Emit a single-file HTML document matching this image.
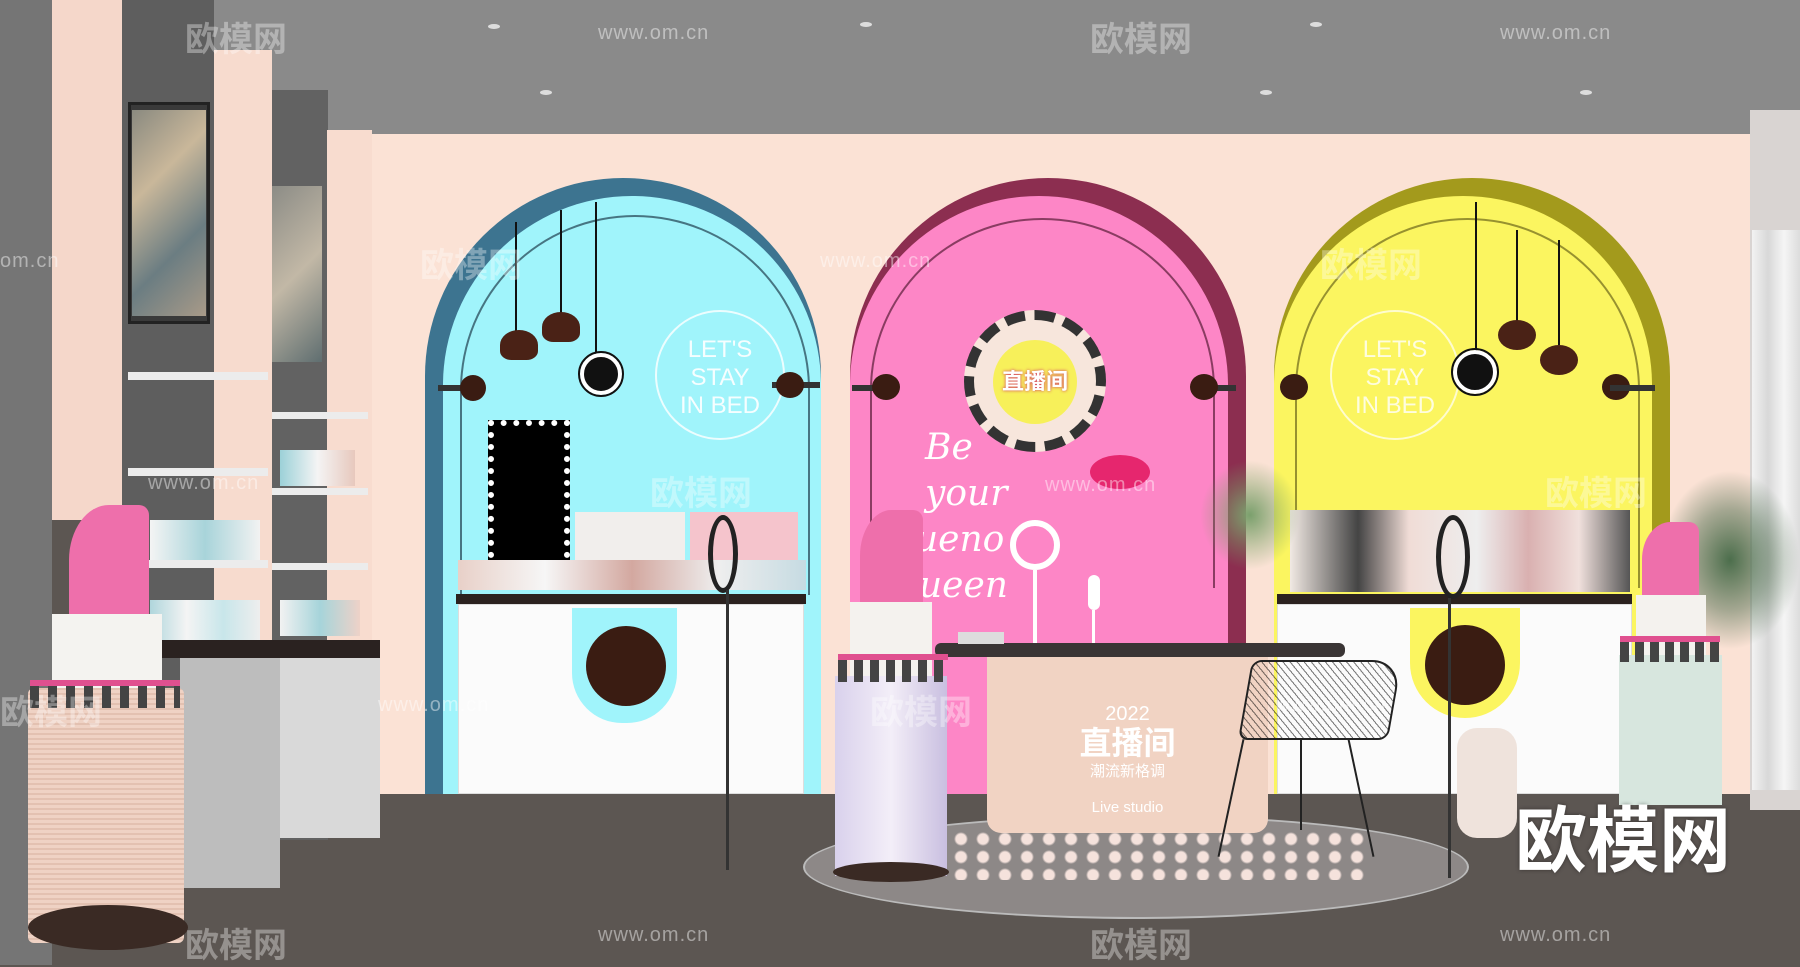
<!DOCTYPE html>
<html><head><meta charset="utf-8"><style>
*{margin:0;padding:0;box-sizing:border-box}
body{width:1800px;height:965px;overflow:hidden;background:#5c5652;position:relative;font-family:"Liberation Sans","Noto Sans CJK SC",sans-serif}
div{position:absolute}
.r{border-radius:50%}
.wm{color:rgba(255,255,255,.35);font-size:34px;font-weight:bold;white-space:nowrap}
.wm2{color:rgba(255,255,255,.45);font-size:20px;white-space:nowrap;letter-spacing:1px}
.lip{width:9px;height:26px;background:#444;border-top:6px solid #e0508f}
</style></head><body>
<!-- ceiling -->
<div style="left:0;top:0;width:1800px;height:134px;background:#8a8a8a"></div>
<div class="r" style="left:488px;top:24px;width:12px;height:5px;background:#ddd"></div>
<div class="r" style="left:860px;top:22px;width:12px;height:5px;background:#ddd"></div>
<div class="r" style="left:1310px;top:22px;width:12px;height:5px;background:#ddd"></div>
<div class="r" style="left:540px;top:90px;width:12px;height:5px;background:#ddd"></div>
<div class="r" style="left:1260px;top:90px;width:12px;height:5px;background:#ddd"></div>
<div class="r" style="left:1580px;top:90px;width:12px;height:5px;background:#ddd"></div>
<!-- back wall -->
<div style="left:327px;top:134px;width:1423px;height:660px;background:#fbe2d5"></div>
<!-- right wall & curtain -->
<div style="left:1750px;top:110px;width:50px;height:700px;background:#d9d4d2"></div>
<div style="left:1752px;top:230px;width:48px;height:560px;background:linear-gradient(90deg,#f2f2f2,#d8d8d8,#f5f5f5,#dcdcdc)"></div>
<!-- left structures -->
<div style="left:0;top:0;width:52px;height:965px;background:#757575"></div>
<div style="left:52px;top:0;width:70px;height:520px;background:#f5d7ca"></div>
<div style="left:122px;top:0;width:92px;height:880px;background:#5e5e5e"></div>
<div style="left:214px;top:50px;width:58px;height:600px;background:#f7dbce"></div>
<div style="left:272px;top:90px;width:56px;height:750px;background:#626262"></div>
<div style="left:327px;top:130px;width:45px;height:680px;background:#f8dccf"></div>
<div style="left:128px;top:102px;width:82px;height:222px;background:#3a3a3a;border:3px solid #222"></div>
<div style="left:132px;top:110px;width:74px;height:206px;background:linear-gradient(135deg,#8a8a80,#c9b79a,#6b7d82,#a89a88)"></div>
<div style="left:272px;top:186px;width:50px;height:176px;background:linear-gradient(135deg,#8c8c86,#c2b8a6,#5f6e70)"></div>
<div style="left:128px;top:372px;width:140px;height:8px;background:#ececec"></div>
<div style="left:128px;top:468px;width:140px;height:8px;background:#ececec"></div>
<div style="left:148px;top:560px;width:120px;height:8px;background:#ececec"></div>
<div style="left:272px;top:412px;width:96px;height:7px;background:#ececec"></div>
<div style="left:272px;top:488px;width:96px;height:7px;background:#ececec"></div>
<div style="left:272px;top:563px;width:96px;height:7px;background:#ececec"></div>
<div style="left:150px;top:600px;width:110px;height:40px;background:linear-gradient(90deg,#b0d6dc,#f4f4f4,#c8e6ea,#eee)"></div>
<div style="left:150px;top:520px;width:110px;height:40px;background:linear-gradient(90deg,#f4f4f4,#a8d4da,#f2f2f2)"></div>
<div style="left:280px;top:450px;width:75px;height:36px;background:linear-gradient(90deg,#9cd1d8,#f4f4f4,#e7c8bd)"></div>
<div style="left:280px;top:600px;width:80px;height:36px;background:linear-gradient(90deg,#f2f2f2,#a6d4da,#eed2c8)"></div>
<div style="left:160px;top:640px;width:220px;height:18px;background:#2a2220"></div>
<div style="left:180px;top:658px;width:100px;height:230px;background:#bdbdbd"></div>
<div style="left:280px;top:658px;width:100px;height:180px;background:#d9d9d9"></div>
<!-- BLUE ARCH -->
<div style="left:425px;top:178px;width:396px;height:616px;background:#3d7490;border-radius:198px 198px 0 0"></div>
<div style="left:443px;top:196px;width:378px;height:598px;background:#a0f4fb;border-radius:189px 189px 0 0"></div>
<div style="left:460px;top:215px;width:350px;height:380px;border:2px solid #214050;border-bottom:none;border-radius:175px 175px 0 0;opacity:.7"></div>
<div class="r" style="left:655px;top:310px;width:130px;height:130px;border:2px solid rgba(255,255,255,.8);color:rgba(255,255,255,.9);font-size:24px;text-align:center;padding-top:24px;line-height:28px">LET'S<br>STAY<br>IN BED</div>
<div style="left:488px;top:420px;width:82px;height:150px;background:#000;border:6px dotted #fff"></div>
<div style="left:575px;top:512px;width:110px;height:50px;background:#f1eeec"></div>
<div style="left:690px;top:512px;width:108px;height:50px;background:#f5c4cc"></div>
<div style="left:458px;top:560px;width:348px;height:30px;background:linear-gradient(90deg,#e8d0c8,#f6f6f6,#d3a8a0,#eeeeee,#c6dbe2)"></div>
<div style="left:456px;top:594px;width:350px;height:10px;background:#2b221f"></div>
<div style="left:458px;top:604px;width:346px;height:190px;background:#fbfbfb;border:1px solid #ddd"></div>
<div style="left:572px;top:608px;width:105px;height:115px;background:#a0f4fb;border-radius:0 0 50px 50px"></div>
<div class="r" style="left:586px;top:626px;width:80px;height:80px;background:#3a1c12"></div>
<div style="left:595px;top:202px;width:2px;height:155px;background:#111"></div>
<div class="r" style="left:580px;top:353px;width:42px;height:42px;background:#111;border:4px solid #fff;outline:2px solid #111"></div>
<div style="left:515px;top:222px;width:2px;height:110px;background:#111"></div>
<div class="r" style="left:500px;top:330px;width:38px;height:30px;background:#4a2216;border-radius:50% 50% 30% 30%"></div>
<div style="left:560px;top:210px;width:2px;height:105px;background:#111"></div>
<div class="r" style="left:542px;top:312px;width:38px;height:30px;background:#4a2216;border-radius:50% 50% 30% 30%"></div>
<div style="left:438px;top:385px;width:36px;height:6px;background:#333"></div>
<div class="r" style="left:460px;top:375px;width:26px;height:26px;background:#3a1c12"></div>
<div style="left:772px;top:382px;width:48px;height:6px;background:#333"></div>
<div class="r" style="left:776px;top:372px;width:28px;height:26px;background:#3a1c12"></div>
<!-- PINK ARCH -->
<div style="left:850px;top:178px;width:396px;height:616px;background:#8c2e50;border-radius:198px 198px 0 0"></div>
<div style="left:850px;top:196px;width:378px;height:598px;background:#fd86c6;border-radius:189px 189px 0 0"></div>
<div style="left:870px;top:218px;width:345px;height:370px;border:2px solid #5a1e38;border-bottom:none;border-radius:172px 172px 0 0;opacity:.7"></div>
<div class="r" style="left:964px;top:310px;width:142px;height:142px;background:#f7e6dc;border:10px dashed #333"></div>
<div class="r" style="left:993px;top:340px;width:84px;height:84px;background:#f7f05a;color:#fff;font-size:22px;font-weight:bold;text-align:center;line-height:84px;text-shadow:0 0 3px #d0306a">直播间</div>
<div class="r" style="left:1090px;top:455px;width:60px;height:34px;background:#e6266e"></div>
<div style="left:925px;top:425px;color:#fff;font-family:'DejaVu Serif',serif;font-style:italic;font-size:36px;line-height:46px">Be<br>your<br><span style="margin-left:-10px">ueno</span><br><span style="margin-left:-6px">ueen</span></div>
<div class="r" style="left:1010px;top:520px;width:50px;height:50px;border:6px solid #fff"></div>
<div style="left:1033px;top:570px;width:4px;height:75px;background:#fff"></div>
<div style="left:1088px;top:575px;width:12px;height:35px;background:#fff;border-radius:6px"></div>
<div style="left:1092px;top:610px;width:3px;height:35px;background:#fff"></div>
<div style="left:852px;top:385px;width:40px;height:6px;background:#333"></div>
<div class="r" style="left:872px;top:374px;width:28px;height:26px;background:#3a1c12"></div>
<div style="left:1200px;top:385px;width:36px;height:6px;background:#333"></div>
<div class="r" style="left:1190px;top:374px;width:28px;height:26px;background:#3a1c12"></div>
<!-- YELLOW ARCH -->
<div style="left:1274px;top:178px;width:396px;height:616px;background:#a39a1c;border-radius:198px 198px 0 0"></div>
<div style="left:1274px;top:196px;width:378px;height:598px;background:#fbf560;border-radius:189px 189px 0 0"></div>
<div style="left:1295px;top:218px;width:345px;height:370px;border:2px solid #555010;border-bottom:none;border-radius:172px 172px 0 0;opacity:.6"></div>
<div class="r" style="left:1330px;top:310px;width:130px;height:130px;border:2px solid rgba(255,255,255,.7);color:rgba(255,255,255,.8);font-size:24px;text-align:center;padding-top:24px;line-height:28px">LET'S<br>STAY<br>IN BED</div>
<div style="left:1290px;top:510px;width:340px;height:82px;background:linear-gradient(90deg,#f1e9e3,#444 20%,#f0dcd6 35%,#eee 55%,#d9b0b0 70%,#f0e0dc 85%,#555)"></div>
<div style="left:1277px;top:594px;width:355px;height:10px;background:#2b221f"></div>
<div style="left:1277px;top:604px;width:355px;height:190px;background:#fbfbfb;border:1px solid #ddd"></div>
<div style="left:1410px;top:608px;width:110px;height:110px;background:#fbf560;border-radius:0 0 55px 55px"></div>
<div class="r" style="left:1425px;top:625px;width:80px;height:80px;background:#3a1c12"></div>
<div style="left:1475px;top:202px;width:2px;height:150px;background:#111"></div>
<div class="r" style="left:1453px;top:350px;width:44px;height:44px;background:#111;border:4px solid #fff;outline:2px solid #111"></div>
<div style="left:1516px;top:230px;width:2px;height:95px;background:#111"></div>
<div class="r" style="left:1498px;top:320px;width:38px;height:30px;background:#4a2216"></div>
<div style="left:1558px;top:240px;width:2px;height:105px;background:#111"></div>
<div class="r" style="left:1540px;top:345px;width:38px;height:30px;background:#4a2216"></div>
<div class="r" style="left:1280px;top:374px;width:28px;height:26px;background:#3a1c12"></div>
<div class="r" style="left:1602px;top:374px;width:28px;height:26px;background:#3a1c12"></div>
<div style="left:1610px;top:385px;width:45px;height:6px;background:#333"></div>
<!-- floor rug -->
<div class="r" style="left:803px;top:815px;width:666px;height:104px;background:#8d8887;border:2px solid #bbb"></div>
<!-- desk -->
<div style="left:935px;top:643px;width:410px;height:14px;background:#3a3535;border-radius:6px"></div>
<div style="left:987px;top:657px;width:281px;height:176px;background:#f1d3c3;border-radius:0 0 14px 14px;color:#fff;text-align:center">
<div style="position:static;margin-top:46px;font-size:20px">2022</div>
<div style="position:static;font-size:32px;font-weight:bold;line-height:34px">直播间</div>
<div style="position:static;font-size:15px">潮流新格调</div>
<div style="position:static;font-size:15px;margin-top:18px">Live studio</div></div>
<div style="left:958px;top:632px;width:46px;height:12px;background:#ddd"></div>
<!-- balls -->
<div style="left:950px;top:830px;width:420px;height:50px;background:radial-gradient(circle,#f5e2dc 5px,transparent 7px) 0 0/22px 18px"></div>
<!-- chair -->
<div style="left:1245px;top:660px;width:150px;height:80px;border:2px solid #222;border-radius:10px 30px 10px 10px;background:repeating-linear-gradient(45deg,transparent 0 4px,rgba(0,0,0,.5) 4px 5px);transform:skewX(-10deg)"></div>
<div style="left:1230px;top:738px;width:2px;height:120px;background:#222;transform:rotate(12deg)"></div>
<div style="left:1360px;top:738px;width:2px;height:120px;background:#222;transform:rotate(-12deg)"></div>
<div style="left:1300px;top:740px;width:2px;height:90px;background:#222"></div>
<!-- ring lights/tripods -->
<div class="r" style="left:708px;top:515px;width:30px;height:78px;border:5px solid #222"></div>
<div style="left:726px;top:590px;width:3px;height:280px;background:#333"></div>
<div style="left:1436px;top:515px;width:34px;height:84px;border:5px solid #222;border-radius:50%"></div>
<div style="left:1448px;top:598px;width:3px;height:280px;background:#333"></div>
<!-- plant -->
<div style="left:1200px;top:460px;width:100px;height:110px;background:radial-gradient(ellipse,#7ba06d 0,rgba(120,160,100,.4) 40%,transparent 70%)"></div>
<div style="left:1660px;top:470px;width:140px;height:180px;background:radial-gradient(ellipse,#4c6e4c 0,rgba(80,110,80,.5) 40%,transparent 70%)"></div>
<div style="left:1457px;top:728px;width:60px;height:110px;background:#efe3dc;border-radius:20px"></div>
<!-- left lipstick -->
<div style="left:69px;top:505px;width:80px;height:110px;background:#ee6fab;border-radius:50% 10px 0 0"></div>
<div style="left:52px;top:614px;width:110px;height:75px;background:#f4f3f0"></div>
<div style="left:28px;top:688px;width:156px;height:255px;background:repeating-linear-gradient(0deg,#efd2c4 0 3px,#e3c1b1 3px 5px);border-radius:6px"></div>
<div style="left:28px;top:905px;width:160px;height:45px;background:#3a2a24;border-radius:50%"></div>
<div style="left:30px;top:680px;width:150px;height:28px;background:repeating-linear-gradient(90deg,#444 0 9px,transparent 9px 18px);border-top:6px solid #e0508f"></div>
<!-- middle lipstick -->
<div style="left:860px;top:510px;width:63px;height:92px;background:#ee6fab;border-radius:50% 10px 0 0"></div>
<div style="left:850px;top:602px;width:82px;height:80px;background:#f4f2ee"></div>
<div style="left:835px;top:676px;width:112px;height:200px;background:linear-gradient(90deg,#d9d1ec,#f3eef8,#c9bfe0)"></div>
<div style="left:833px;top:862px;width:116px;height:20px;background:#3a2a24;border-radius:50%"></div>
<div style="left:838px;top:654px;width:110px;height:28px;background:repeating-linear-gradient(90deg,#444 0 9px,transparent 9px 16px);border-top:6px solid #e0508f"></div>
<!-- right lipstick -->
<div style="left:1642px;top:522px;width:57px;height:75px;background:#ee6fab;border-radius:50% 10px 0 0"></div>
<div style="left:1636px;top:595px;width:70px;height:60px;background:#f4f2ee"></div>
<div style="left:1619px;top:655px;width:103px;height:150px;background:#d7e6de"></div>
<div style="left:1620px;top:636px;width:100px;height:26px;background:repeating-linear-gradient(90deg,#444 0 9px,transparent 9px 15px);border-top:6px solid #e0508f"></div>
<!-- watermarks -->
<div class="wm" style="left:185px;top:12px">欧模网</div>
<div class="wm2" style="left:598px;top:22px">www.om.cn</div>
<div class="wm" style="left:1090px;top:12px">欧模网</div>
<div class="wm2" style="left:1500px;top:22px">www.om.cn</div>
<div class="wm2" style="left:0;top:250px">om.cn</div>
<div class="wm" style="left:420px;top:238px">欧模网</div>
<div class="wm2" style="left:820px;top:250px">www.om.cn</div>
<div class="wm" style="left:1320px;top:238px">欧模网</div>
<div class="wm2" style="left:148px;top:472px">www.om.cn</div>
<div class="wm" style="left:650px;top:466px">欧模网</div>
<div class="wm2" style="left:1045px;top:474px">www.om.cn</div>
<div class="wm" style="left:1545px;top:466px">欧模网</div>
<div class="wm" style="left:0;top:685px">欧模网</div>
<div class="wm2" style="left:378px;top:694px">www.om.cn</div>
<div class="wm" style="left:870px;top:685px">欧模网</div>
<div class="wm2" style="left:1275px;top:694px">www.om.cn</div>
<div class="wm" style="left:185px;top:918px">欧模网</div>
<div class="wm2" style="left:598px;top:924px">www.om.cn</div>
<div class="wm" style="left:1090px;top:918px">欧模网</div>
<div class="wm2" style="left:1500px;top:924px">www.om.cn</div>
<div style="left:1515px;top:782px;color:#fff;font-size:72px;font-weight:bold;text-shadow:0 0 4px rgba(0,0,0,.4)">欧模网</div>
</body></html>
